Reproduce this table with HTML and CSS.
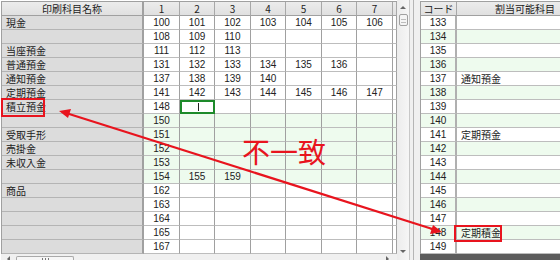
FILE: index.html
```html
<!DOCTYPE html>
<html lang="ja">
<head>
<meta charset="utf-8">
<title>印刷科目</title>
<link rel="stylesheet" href="styles.css">
</head>
<body>
<div class="screen">
  <div class="left">
    <div class="grid">
      <div class="hd name">印刷科目名称</div><div class="hd">1</div><div class="hd">2</div><div class="hd">3</div><div class="hd">4</div><div class="hd">5</div><div class="hd">6</div><div class="hd">7</div><div class="hd"></div>

      <div class="nm">現金</div><div class="c">100</div><div class="c">101</div><div class="c">102</div><div class="c">103</div><div class="c">104</div><div class="c">105</div><div class="c">106</div><div class="c"></div>
      <div class="nm"></div><div class="c">108</div><div class="c">109</div><div class="c">110</div><div class="c"></div><div class="c"></div><div class="c"></div><div class="c"></div><div class="c"></div>
      <div class="nm">当座預金</div><div class="c">111</div><div class="c">112</div><div class="c">113</div><div class="c"></div><div class="c"></div><div class="c"></div><div class="c"></div><div class="c"></div>
      <div class="nm">普通預金</div><div class="c">131</div><div class="c">132</div><div class="c">133</div><div class="c">134</div><div class="c">135</div><div class="c">136</div><div class="c"></div><div class="c"></div>
      <div class="nm">通知預金</div><div class="c">137</div><div class="c">138</div><div class="c">139</div><div class="c">140</div><div class="c"></div><div class="c"></div><div class="c"></div><div class="c"></div>
      <div class="nm">定期預金</div><div class="c">141</div><div class="c">142</div><div class="c">143</div><div class="c">144</div><div class="c">145</div><div class="c">146</div><div class="c">147</div><div class="c"></div>
      <div class="nm">積立預金</div><div class="c">148</div><div class="c sel"><span class="caret"></span></div><div class="c"></div><div class="c"></div><div class="c"></div><div class="c"></div><div class="c"></div><div class="c"></div>
      <div class="nm"></div><div class="c g">150</div><div class="c g"></div><div class="c g"></div><div class="c g"></div><div class="c g"></div><div class="c g"></div><div class="c g"></div><div class="c g"></div>
      <div class="nm">受取手形</div><div class="c g">151</div><div class="c g"></div><div class="c g"></div><div class="c g"></div><div class="c g"></div><div class="c g"></div><div class="c g"></div><div class="c g"></div>
      <div class="nm">売掛金</div><div class="c g">152</div><div class="c g"></div><div class="c g"></div><div class="c g"></div><div class="c g"></div><div class="c g"></div><div class="c g"></div><div class="c g"></div>
      <div class="nm">未収入金</div><div class="c g">153</div><div class="c g"></div><div class="c g"></div><div class="c g"></div><div class="c g"></div><div class="c g"></div><div class="c g"></div><div class="c g"></div>
      <div class="nm"></div><div class="c g">154</div><div class="c g">155</div><div class="c g">159</div><div class="c g"></div><div class="c g"></div><div class="c g"></div><div class="c g"></div><div class="c g"></div>
      <div class="nm">商品</div><div class="c">162</div><div class="c"></div><div class="c"></div><div class="c"></div><div class="c"></div><div class="c"></div><div class="c"></div><div class="c"></div>
      <div class="nm"></div><div class="c">163</div><div class="c"></div><div class="c"></div><div class="c"></div><div class="c"></div><div class="c"></div><div class="c"></div><div class="c"></div>
      <div class="nm"></div><div class="c">164</div><div class="c"></div><div class="c"></div><div class="c"></div><div class="c"></div><div class="c"></div><div class="c"></div><div class="c"></div>
      <div class="nm"></div><div class="c">165</div><div class="c"></div><div class="c"></div><div class="c"></div><div class="c"></div><div class="c"></div><div class="c"></div><div class="c"></div>
      <div class="nm"></div><div class="c">167</div><div class="c"></div><div class="c"></div><div class="c"></div><div class="c"></div><div class="c"></div><div class="c"></div><div class="c"></div>
    </div>
    <div class="hscroll">
      <span class="tri tri-left"></span>
      <span class="hthumb"></span>
      <span class="hspace"></span>
      <span class="tri tri-right"></span>
    </div>
  </div>

  <div class="vscroll">
    <span class="tri tri-up"></span>
    <span class="vthumb"></span>
    <span class="vspace"></span>
    <span class="tri tri-down"></span>
  </div>

  <div class="sep"></div>

  <div class="right">
    <div class="rgrid">
      <div class="hd">コード</div><div class="hd alloc">割当可能科目</div>
      <div class="k">133</div><div class="v"></div>
      <div class="k g">134</div><div class="v g"></div>
      <div class="k">135</div><div class="v"></div>
      <div class="k g">136</div><div class="v g"></div>
      <div class="k">137</div><div class="v">通知預金</div>
      <div class="k g">138</div><div class="v g"></div>
      <div class="k">139</div><div class="v"></div>
      <div class="k g">140</div><div class="v g"></div>
      <div class="k">141</div><div class="v">定期預金</div>
      <div class="k g">142</div><div class="v g"></div>
      <div class="k">143</div><div class="v"></div>
      <div class="k g">144</div><div class="v g"></div>
      <div class="k">145</div><div class="v"></div>
      <div class="k g">146</div><div class="v g"></div>
      <div class="k">147</div><div class="v"></div>
      <div class="k g">148</div><div class="v g">定期積金</div>
      <div class="k">149</div><div class="v"></div>
    </div>
    <div class="rbar"></div>
  </div>

  <svg class="overlay" width="560" height="260" viewBox="0 0 560 260">
    <rect x="2" y="99" width="42" height="17" fill="none" stroke="#e8141e" stroke-width="2"/>
    <rect x="455" y="226" width="46" height="15" fill="none" stroke="#e8141e" stroke-width="2"/>
    <line x1="66" y1="113" x2="434" y2="229.5" stroke="#e8141e" stroke-width="2.2"/>
    <polygon points="59,111 71,109 68,118" fill="#e8141e"/>
    <polygon points="442,232 430,234 433,225" fill="#e8141e"/>
  </svg>
  <div class="mismatch">不一致</div>
</div>
</body>
</html>
```

FILE: styles.css
```css
* { box-sizing: border-box; }
html, body { margin: 0; padding: 0; }
body {
  width: 560px;
  height: 260px;
  overflow: hidden;
  background: #f0f0f0;
  font-family: "Liberation Sans", "Noto Sans CJK JP", sans-serif;
  font-size: 10px;
  color: #222;
}
.screen {
  position: relative;
  width: 560px;
  height: 260px;
  display: flex;
  overflow: hidden;
}
.screen > * { flex-shrink: 0; }
.left {
  width: 397px;
  display: flex;
  flex-direction: column;
  padding: 1px 0 0 1px;
  background: #fff;
  overflow: hidden;
}
.grid {
  display: grid;
  grid-template-columns: 142px 36px 35px 36px 35px 36px 35px 36px 4px;
  grid-template-rows: 14px;
  grid-auto-rows: 14px;
  border-left: 1px solid #a0a0a0;
  border-top: 1px solid #a0a0a0;
}
.hd {
  background: linear-gradient(#ececec, #e0e0e0);
  border-right: 1px solid #a8a8a8;
  border-bottom: 1px solid #a0a0a0;
  text-align: center;
  line-height: 13px;
  font-family: "Noto Sans CJK JP", "Liberation Sans", sans-serif;
  white-space: nowrap;
  overflow: hidden;
}
.hd.name { border-right: 2px solid #a0a0a0; }
.nm {
  background: #dcdcdc;
  border-right: 2px solid #a0a0a0;
  border-bottom: 1px solid #b4b4b4;
  padding-left: 4px;
  line-height: 13px;
  font-family: "Noto Sans CJK JP", sans-serif;
  white-space: nowrap;
}
.c {
  background: #fff;
  border-right: 1px solid #a0a0a0;
  border-bottom: 1px solid #bdbdbd;
  text-align: center;
  line-height: 13px;
  position: relative;
}
.g { background: #eefbee; }
.sel { border: 2px solid #1d8a2a; }
.caret {
  position: absolute;
  left: 16px;
  top: 1px;
  width: 1px;
  height: 8px;
  background: #222;
}
.hscroll {
  height: 7px;
  display: flex;
  align-items: flex-start;
  background: #f0f0f0;
  padding-top: 2px;
}
.tri {
  width: 0;
  height: 0;
  border: 3px solid transparent;
}
.tri-left { border-right-color: #666; border-left-width: 0; margin: 0 6px 0 6px; }
.tri-right { border-left-color: #666; border-right-width: 0; margin: 0 8px 0 6px; }
.tri-up { border-bottom-color: #666; border-top-width: 0; margin: 5px 0 5px; }
.tri-down { border-top-color: #666; border-bottom-width: 0; margin: 5px 0 4px; }
.hthumb {
  width: 58px;
  height: 6px;
  border: 1px solid #a9a9a9;
  border-bottom: none;
  border-radius: 2px 2px 0 0;
  background:
    linear-gradient(90deg, transparent 25px, #777 25px 26px, transparent 26px 28px, #777 28px 29px, transparent 29px 31px, #777 31px 32px, transparent 32px) 0 1px / 100% 4px no-repeat,
    #f6f6f6;
}
.hspace { flex: 1; }
.vscroll {
  width: 13px;
  display: flex;
  flex-direction: column;
  align-items: center;
  background: linear-gradient(90deg, #ececec, #f6f6f6);
  border-right: 1px solid #c8c8c8;
  padding: 1px 0 3px;
}
.vthumb {
  width: 9px;
  height: 12px;
  border: 1px solid #a0a0a0;
  border-radius: 2px;
  background: repeating-linear-gradient(#f4f4f4 0 2px, #bcbcbc 2px 3px) center / 5px 6px no-repeat, #f4f4f4;
}
.vspace { flex: 1; }
.sep {
  width: 10px;
  background: #f0f0f0;
  border-left: 3px solid #f0f0f0;
  box-shadow: inset 1px 0 0 #b5b5b5;
}
.right {
  width: 140px;
  display: flex;
  flex-direction: column;
  padding-top: 1px;
  background: #fff;
  overflow: hidden;
}
.rgrid {
  display: grid;
  grid-template-columns: 36px 103px;
  grid-auto-rows: 14px;
  border-left: 1px solid #a0a0a0;
  border-top: 1px solid #a0a0a0;
  flex: 1;
}
.alloc { text-align: right; padding-right: 5px; border-right: none; }
.k {
  background: #fff;
  border-right: 2px solid #b0b0b0;
  border-bottom: 1px solid #bdbdbd;
  text-align: center;
  line-height: 13px;
}
.v {
  background: #fff;
  border-bottom: 1px solid #bdbdbd;
  padding-left: 4px;
  line-height: 13px;
  font-family: "Noto Sans CJK JP", sans-serif;
}
.k.g, .v.g { background: #eefbee; }
.rbar {
  height: 7px;
  background: #5c5c5c;
}
.overlay {
  position: absolute;
  left: 0;
  top: 0;
  pointer-events: none;
}
.mismatch {
  position: absolute;
  left: 242px;
  top: 131px;
  font-family: "Noto Sans CJK JP", sans-serif;
  font-size: 28px;
  line-height: 40px;
  color: #e8141e;
}
```
